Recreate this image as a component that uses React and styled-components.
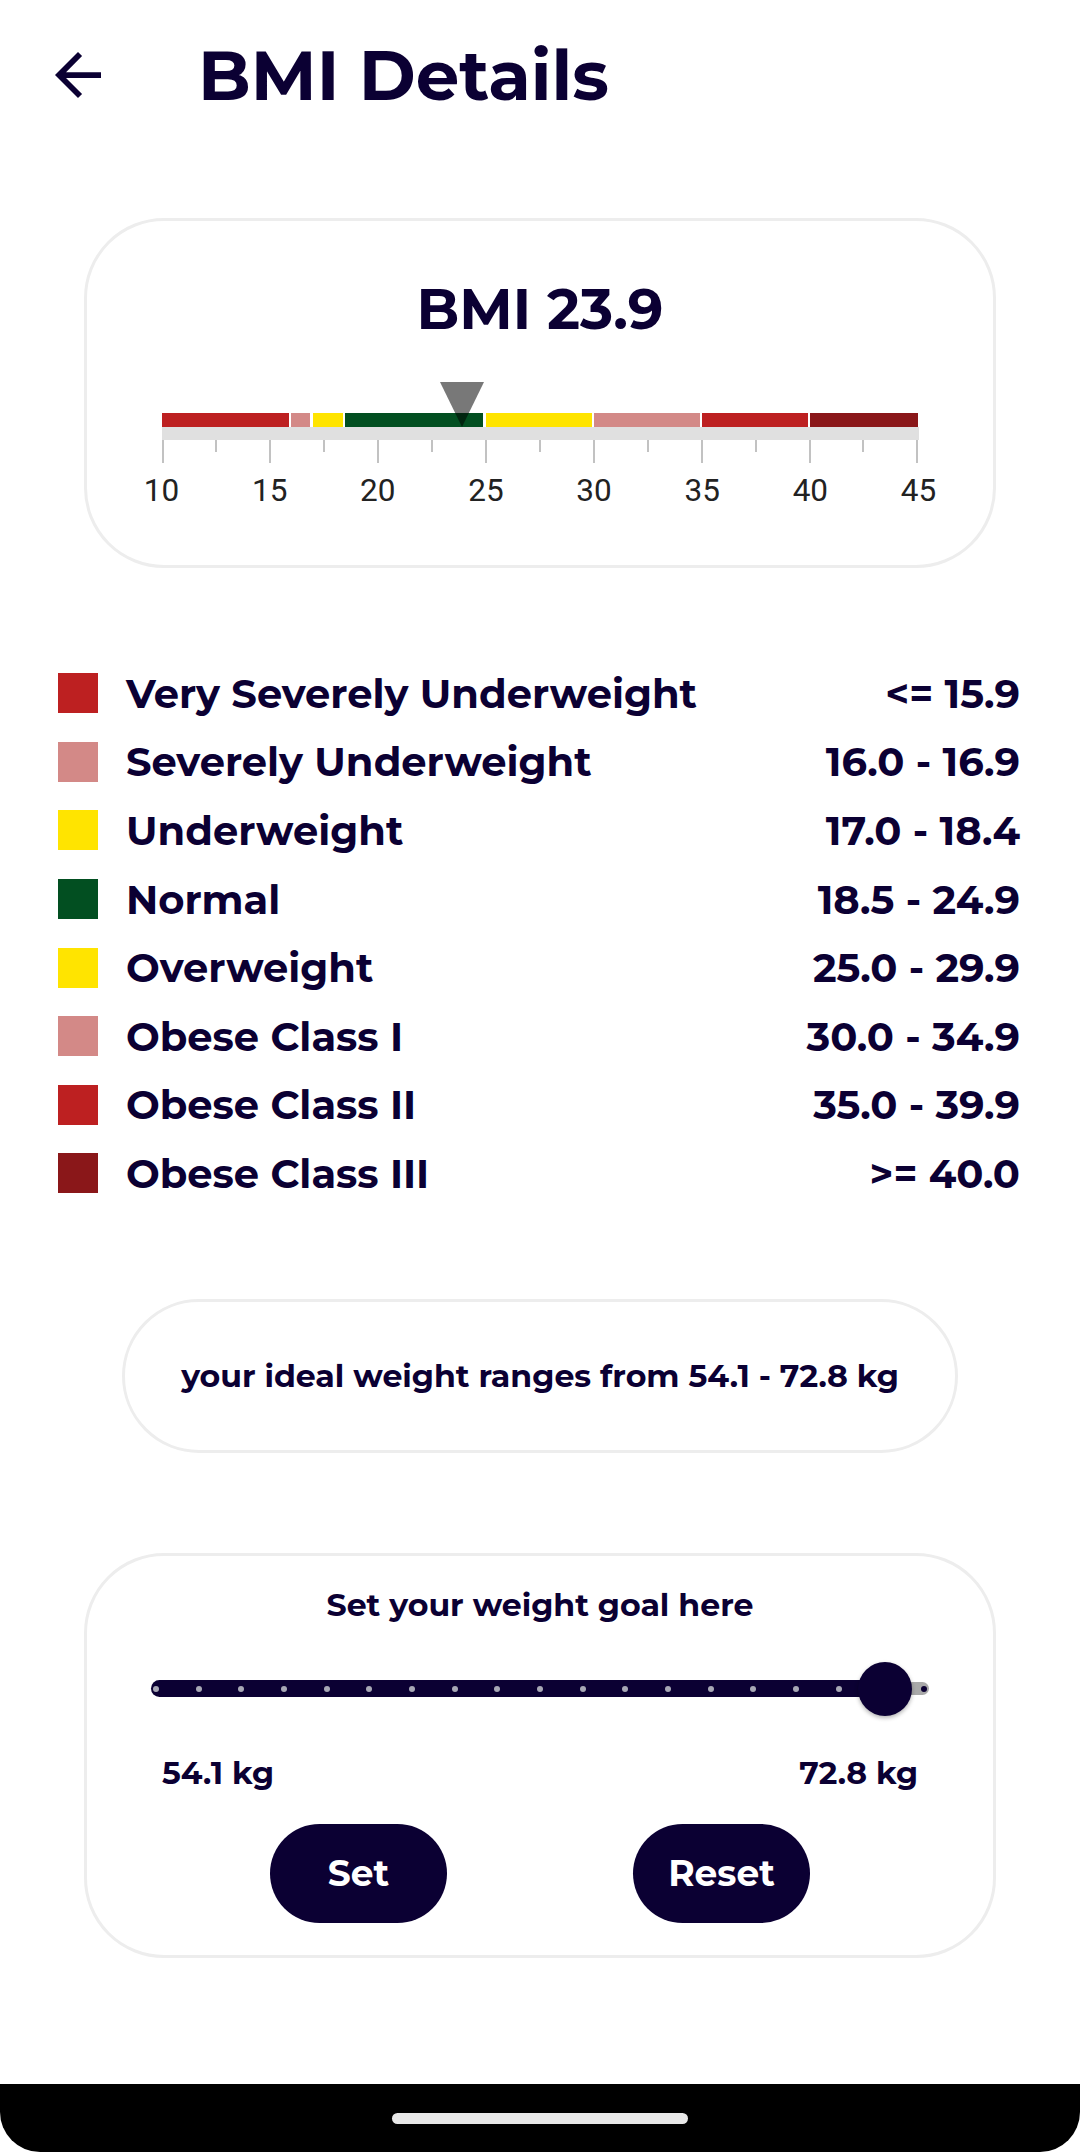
import React from 'react';
import styled, { createGlobalStyle } from 'styled-components';

const navy = '#0B0033';
const font = `Montserrat, Inter, "Noto Sans", sans-serif`;

const GlobalStyle = createGlobalStyle`
  body {
    margin: 0;
    background: #fff;
    font-family: ${font};
    color: ${navy};
  }
`;

const Page = styled.div`
  width: 1080px;
  min-height: 2152px;
  display: flex;
  flex-direction: column;
  box-sizing: border-box;
`;

const Header = styled.div`
  display: flex;
  align-items: center;
  height: 150px;
  padding-left: 55px;
`;

const BackIcon = styled.svg`
  width: 46px;
  height: 46px;
  fill: ${navy};
`;

const Title = styled.h1`
  margin: 0 0 0 97px;
  font-size: 69px;
  font-weight: 700;
  line-height: 1;
`;

const Card = styled.div`
  box-sizing: border-box;
  margin: ${(p) => p.top}px auto 0;
  width: ${(p) => p.w}px;
  height: ${(p) => p.h}px;
  border: 3px solid #ededed;
  border-radius: ${(p) => p.radius}px;
  display: flex;
  flex-direction: column;
  align-items: center;
`;

const BmiValue = styled.div`
  margin-top: 50px;
  font-size: 56px;
  font-weight: 700;
  line-height: 76px;
`;

const Scale = styled.div`
  position: relative;
  width: 757px;
  margin-top: 35px;
  padding-top: 31px;
`;

const Marker = styled.svg`
  position: absolute;
  top: 0;
  width: 44px;
  height: 45px;
  margin-left: -22px;
`;

const SegmentRow = styled.div`
  display: flex;
  height: 14px;
`;

const Segment = styled.div`
  flex: 0 0 calc(${(p) => p.pct}% - ${(p) => (p.last ? 0 : 2.5)}px);
  margin-right: ${(p) => (p.last ? 0 : 2.5)}px;
  background: ${(p) => p.color};
`;

const Rail = styled.div`
  height: 13px;
  background: #e0e0e0;
`;

const TickRow = styled.div`
  display: flex;
  justify-content: space-between;
  align-items: flex-start;
  height: 23px;
`;

const Tick = styled.div`
  width: 2px;
  height: ${(p) => (p.major ? 23 : 12)}px;
  background: #c2c2c2;
`;

const LabelRow = styled.div`
  display: flex;
  justify-content: space-between;
  margin-top: 8px;
`;

const AxisLabel = styled.div`
  width: 0;
  display: flex;
  justify-content: center;
  font-family: Roboto, "Noto Sans", sans-serif;
  font-size: 31.5px;
  line-height: 40px;
  color: #222;
  white-space: nowrap;
`;

const Legend = styled.div`
  margin-top: 91px;
  padding: 0 60px 0 58px;
  display: flex;
  flex-direction: column;
`;

const LegendRow = styled.div`
  display: flex;
  align-items: center;
  height: 68.6px;
`;

const Swatch = styled.div`
  width: 40px;
  height: 40px;
  background: ${(p) => p.color};
  flex: none;
`;

const LegendName = styled.div`
  margin-left: 28px;
  flex: 1;
  font-size: 40px;
  font-weight: 700;
`;

const LegendRange = styled.div`
  font-size: 40px;
  font-weight: 700;
`;

const IdealText = styled.div`
  margin: auto 0;
  font-size: 31.6px;
  font-weight: 700;
`;

const GoalTitle = styled.div`
  margin-top: 29px;
  font-size: 31.6px;
  font-weight: 700;
  line-height: 40px;
`;

const Slider = styled.div`
  position: relative;
  width: 778px;
  height: 56px;
  margin-top: 36px;
  display: flex;
  align-items: center;
`;

const ActiveTrack = styled.div`
  height: 17px;
  background: ${navy};
  border-radius: 9px 0 0 9px;
`;

const InactiveTrack = styled.div`
  flex: 1;
  height: 13px;
  background: #a9a9a9;
  border-radius: 0 7px 7px 0;
`;

const DotRow = styled.div`
  position: absolute;
  left: 0;
  right: 0;
  top: 25px;
  padding: 0 2px;
  display: flex;
  justify-content: space-between;
`;

const Dot = styled.div`
  width: 6px;
  height: 6px;
  border-radius: 50%;
  background: ${(p) => (p.active ? '#a7a7b5' : navy)};
`;

const Thumb = styled.div`
  position: absolute;
  top: 1px;
  width: 54px;
  height: 54px;
  margin-left: -27px;
  border-radius: 50%;
  background: ${navy};
  box-shadow: 0 2px 4px rgba(0, 0, 0, 0.3);
`;

const RangeLabels = styled.div`
  width: 756px;
  display: flex;
  justify-content: space-between;
  margin-top: 36px;
  font-size: 31.5px;
  font-weight: 700;
  line-height: 40px;
`;

const ButtonRow = styled.div`
  display: flex;
  gap: 186px;
  margin-top: 31px;
`;

const PillButton = styled.button`
  width: 177px;
  height: 99px;
  border: none;
  border-radius: 50px;
  background: ${navy};
  color: #fff;
  font-family: ${font};
  font-size: 36px;
  font-weight: 700;
`;

const Spacer = styled.div`
  flex: 1;
`;

const NavBar = styled.div`
  height: 68px;
  background: #000;
  border-radius: 0 0 40px 40px;
  display: flex;
  justify-content: center;
  padding-top: 29px;
  box-sizing: border-box;
`;

const HomePill = styled.div`
  width: 296px;
  height: 11px;
  border-radius: 6px;
  background: #e8e8e8;
`;

const categories = [
  { name: 'Very Severely Underweight', range: '<= 15.9', color: '#BD2021', from: 10, to: 16 },
  { name: 'Severely Underweight', range: '16.0 - 16.9', color: '#D38987', from: 16, to: 17 },
  { name: 'Underweight', range: '17.0 - 18.4', color: '#FFE400', from: 17, to: 18.5 },
  { name: 'Normal', range: '18.5 - 24.9', color: '#024F21', from: 18.5, to: 25 },
  { name: 'Overweight', range: '25.0 - 29.9', color: '#FFE400', from: 25, to: 30 },
  { name: 'Obese Class I', range: '30.0 - 34.9', color: '#D38987', from: 30, to: 35 },
  { name: 'Obese Class II', range: '35.0 - 39.9', color: '#BD2021', from: 35, to: 40 },
  { name: 'Obese Class III', range: '>= 40.0', color: '#8A1719', from: 40, to: 45 },
];

const MIN = 10;
const MAX = 45;
const bmi = 23.9;
const ticks = Array.from({ length: 15 }, (_, i) => MIN + i * 2.5);
const labels = [10, 15, 20, 25, 30, 35, 40, 45];
const steps = 18;
const goalStep = 17;

export default function App() {
  const markerPct = ((bmi - MIN) / (MAX - MIN)) * 100;
  const thumbLeft = 9 + (goalStep / steps) * 768;

  return (
    <Page>
      <GlobalStyle />
      <Header>
        <BackIcon viewBox="4 4 16 16">
          <path d="M20 11H7.83l5.59-5.59L12 4l-8 8 8 8 1.41-1.41L7.83 13H20v-2z" />
        </BackIcon>
        <Title>BMI Details</Title>
      </Header>

      <Card top={68} w={912} h={350} radius={80}>
        <BmiValue>BMI {bmi}</BmiValue>
        <Scale>
          <Marker viewBox="0 0 44 45" style={{ left: `${markerPct}%` }}>
            <polygon points="0,0 44,0 22,45" fill="rgba(0,0,0,0.53)" />
          </Marker>
          <SegmentRow>
            {categories.map((c, i) => (
              <Segment
                key={c.name}
                color={c.color}
                pct={((c.to - c.from) / (MAX - MIN)) * 100}
                last={i === categories.length - 1}
              />
            ))}
          </SegmentRow>
          <Rail />
          <TickRow>
            {ticks.map((t) => (
              <Tick key={t} major={t % 5 === 0} />
            ))}
          </TickRow>
          <LabelRow>
            {labels.map((l) => (
              <AxisLabel key={l}>{l}</AxisLabel>
            ))}
          </LabelRow>
        </Scale>
      </Card>

      <Legend>
        {categories.map((c) => (
          <LegendRow key={c.name}>
            <Swatch color={c.color} />
            <LegendName>{c.name}</LegendName>
            <LegendRange>{c.range}</LegendRange>
          </LegendRow>
        ))}
      </Legend>

      <Card top={91} w={836} h={154} radius={77}>
        <IdealText>your ideal weight ranges from 54.1 - 72.8 kg</IdealText>
      </Card>

      <Card top={100} w={912} h={405} radius={80}>
        <GoalTitle>Set your weight goal here</GoalTitle>
        <Slider>
          <ActiveTrack style={{ width: thumbLeft }} />
          <InactiveTrack />
          <DotRow>
            {Array.from({ length: steps + 1 }, (_, i) => (
              <Dot key={i} active={i <= goalStep} />
            ))}
          </DotRow>
          <Thumb style={{ left: thumbLeft }} />
        </Slider>
        <RangeLabels>
          <span>54.1 kg</span>
          <span>72.8 kg</span>
        </RangeLabels>
        <ButtonRow>
          <PillButton>Set</PillButton>
          <PillButton>Reset</PillButton>
        </ButtonRow>
      </Card>

      <Spacer />
      <NavBar>
        <HomePill />
      </NavBar>
    </Page>
  );
}
